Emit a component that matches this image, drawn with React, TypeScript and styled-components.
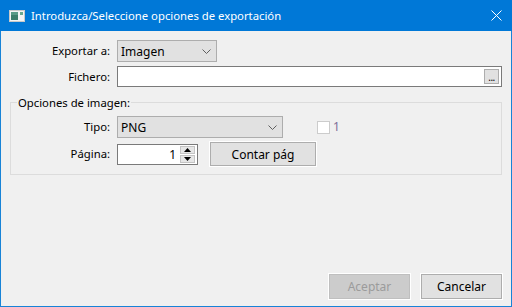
import React from "react";
import styled, { createGlobalStyle } from "styled-components";

const GlobalStyle = createGlobalStyle`
  html, body {
    margin: 0;
    padding: 0;
    background: #f0f0f0;
  }
  body {
    font-family: "Noto Sans", "Open Sans", sans-serif;
    font-size: 11.3px;
    color: #000;
  }
`;

const Window = styled.div`
  width: 512px;
  height: 307px;
  box-sizing: border-box;
  display: flex;
  flex-direction: column;
  border: 1px solid #1883d7;
  border-top: none;
  background: #f0f0f0;
`;

const TitleBar = styled.div`
  height: 31px;
  flex: none;
  margin: 0 -1px;
  background: #0078d7;
  display: flex;
  align-items: center;
  padding: 0 0 0 9px;
  color: #fff;
  font-size: 11.3px;
`;

const TitleText = styled.span`
  margin-left: 6px;
  flex: 1;
  white-space: nowrap;
`;

const CloseButton = styled.div`
  width: 46px;
  height: 31px;
  display: flex;
  align-items: center;
  justify-content: center;
  margin-right: -7px;
`;

const Body = styled.div`
  flex: 1;
  display: flex;
  flex-direction: column;
  padding: 9px 9px 7px 0;
`;

const FormGrid = styled.div<{ $labelWidth: number }>`
  display: grid;
  grid-template-columns: ${(p) => p.$labelWidth}px 1fr;
  column-gap: 7px;
  row-gap: 4px;
  align-items: center;
`;

const Label = styled.label`
  text-align: right;
  white-space: nowrap;
  line-height: 16px;
`;

const Combo = styled.div<{ $width: number }>`
  width: ${(p) => p.$width}px;
  height: 22px;
  box-sizing: border-box;
  border: 1px solid #adadad;
  background: #e1e1e1;
  display: flex;
  align-items: center;
  justify-content: space-between;
  padding: 0 5px 0 3px;
  font-size: 12px;
`;

const TextInput = styled.div`
  height: 21px;
  box-sizing: border-box;
  border: 1px solid #7a7a7a;
  background: #fff;
  display: flex;
  align-items: center;
  justify-content: flex-end;
  padding-right: 2px;
`;

const BrowseButton = styled.div`
  width: 15px;
  height: 15px;
  box-sizing: border-box;
  border: 1px solid #adadad;
  background: #e1e1e1;
  display: flex;
  align-items: flex-end;
  justify-content: center;
  font-size: 10px;
  line-height: 10px;
  letter-spacing: -0.5px;
  padding-bottom: 1px;
`;

const Group = styled.fieldset`
  margin: 8px 0 0 9px;
  border: 1px solid #dcdcdc;
  padding: 6px 0 8px 0;
  min-width: 0;
`;

const Legend = styled.legend`
  margin-left: 6px;
  padding: 0 1px;
  line-height: 15px;
`;

const Row = styled.div<{ $gap: number }>`
  display: flex;
  align-items: center;
  gap: ${(p) => p.$gap}px;
`;

const Check = styled.span`
  width: 13px;
  height: 13px;
  box-sizing: border-box;
  border: 1px solid #cccccc;
  background: #fff;
`;

const CheckLabel = styled.span`
  color: #7d6f99;
  margin-left: 3px;
  line-height: 14px;
  font-size: 12px;
`;

const Spin = styled.div`
  width: 81px;
  height: 21px;
  box-sizing: border-box;
  border: 1px solid #7a7a7a;
  background: #fff;
  display: flex;
  align-items: center;
  padding: 1px 2px 1px 0;
`;

const SpinValue = styled.span`
  flex: 1;
  text-align: right;
  padding-right: 4px;
  font-size: 12px;
`;

const SpinButtons = styled.div`
  width: 15px;
  height: 17px;
  display: flex;
  flex-direction: column;
  gap: 1px;
`;

const SpinButton = styled.div`
  flex: 1;
  box-sizing: border-box;
  border: 1px solid #c4c4c4;
  background: #e6e6e6;
  display: flex;
  align-items: center;
  justify-content: center;
`;

const Button = styled.div<{ $width: number; $height: number; $disabled?: boolean }>`
  width: ${(p) => p.$width}px;
  height: ${(p) => p.$height}px;
  box-sizing: border-box;
  border: 1px solid ${(p) => (p.$disabled ? "#bfbfbf" : "#adadad")};
  background: ${(p) => (p.$disabled ? "#cccccc" : "#e1e1e1")};
  color: ${(p) => (p.$disabled ? "#9b9b9b" : "#000")};
  display: flex;
  align-items: center;
  justify-content: center;
  font-size: 12px;
  outline: 1px solid #fff;
`;

const Footer = styled.div`
  margin-top: auto;
  display: flex;
  justify-content: flex-end;
  gap: 11px;
`;

const Chevron = () => (
  <svg width="9" height="5" viewBox="0 0 9 5">
    <path d="M0.5 0.5 L4.5 4.5 L8.5 0.5" fill="none" stroke="#5f5f5f" strokeWidth="1" />
  </svg>
);

const Arrow = ({ up }: { up?: boolean }) => (
  <svg width="7" height="4" viewBox="0 0 7 4">
    <path d={up ? "M0 4 L3.5 0 L7 4 Z" : "M0 0 L3.5 4 L7 0 Z"} fill="#000" />
  </svg>
);

const AppIcon = () => (
  <svg width="16" height="12" viewBox="0 0 16 12">
    <rect x="0.5" y="0.5" width="15" height="11" fill="#f4f4f4" stroke="#c9c9c9" />
    <rect x="2" y="2" width="7" height="8" fill="#3d7d6a" />
    <rect x="2" y="2" width="7" height="3" fill="#5a9a86" />
    <rect x="11" y="2" width="3" height="3" fill="#6aa88f" />
  </svg>
);

export default function App() {
  return (
    <>
      <GlobalStyle />
      <Window>
        <TitleBar>
          <AppIcon />
          <TitleText>Introduzca/Seleccione opciones de exportación</TitleText>
          <CloseButton>
            <svg width="11" height="11" viewBox="0 0 11 11">
              <path d="M0.5 0.5 L10.5 10.5 M10.5 0.5 L0.5 10.5" stroke="#fff" strokeWidth="1" />
            </svg>
          </CloseButton>
        </TitleBar>
        <Body>
          <FormGrid $labelWidth={109}>
            <Label>Exportar a:</Label>
            <Combo $width={100}>
              <span>Imagen</span>
              <Chevron />
            </Combo>
            <Label>Fichero:</Label>
            <TextInput>
              <BrowseButton>...</BrowseButton>
            </TextInput>
          </FormGrid>
          <Group>
            <Legend>Opciones de imagen:</Legend>
            <FormGrid $labelWidth={99}>
              <Label>Tipo:</Label>
              <Row $gap={34}>
                <Combo $width={166}>
                  <span>PNG</span>
                  <Chevron />
                </Combo>
                <Row $gap={0}>
                  <Check />
                  <CheckLabel>1</CheckLabel>
                </Row>
              </Row>
              <Label>Página:</Label>
              <Row $gap={12}>
                <Spin>
                  <SpinValue>1</SpinValue>
                  <SpinButtons>
                    <SpinButton>
                      <Arrow up />
                    </SpinButton>
                    <SpinButton>
                      <Arrow />
                    </SpinButton>
                  </SpinButtons>
                </Spin>
                <Button $width={106} $height={24}>
                  Contar pág
                </Button>
              </Row>
            </FormGrid>
          </Group>
          <Footer>
            <Button $width={81} $height={25} $disabled>
              Aceptar
            </Button>
            <Button $width={81} $height={25}>
              Cancelar
            </Button>
          </Footer>
        </Body>
      </Window>
    </>
  );
}
